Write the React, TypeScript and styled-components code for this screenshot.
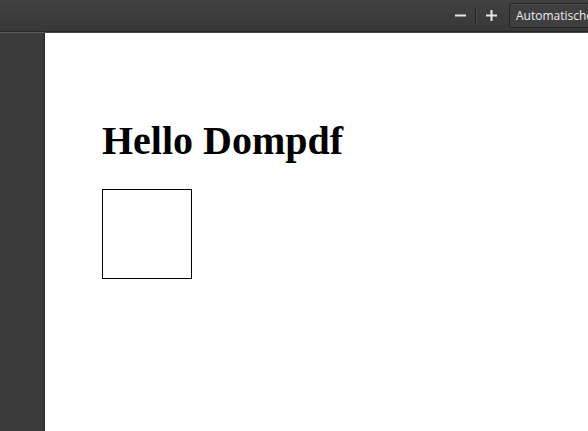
import styled, { createGlobalStyle } from "styled-components";

const GlobalStyle = createGlobalStyle`
  html, body {
    margin: 0;
    padding: 0;
    overflow: hidden;
    background: #3a3a3a;
  }
`;

const Viewer = styled.div`
  width: 588px;
  height: 431px;
  display: flex;
  flex-direction: column;
  background: #3b3b3b;
  overflow: hidden;
`;

const Toolbar = styled.div`
  height: 32px;
  flex: none;
  display: flex;
  align-items: center;
  padding-left: 449px;
  white-space: nowrap;
  overflow: hidden;
  background: linear-gradient(#414141, #383838);
  border-bottom: 1px solid #2a2a2a;
  box-shadow: 0 1px 0 #5a5a5a;
  box-sizing: border-box;
  font-family: "Open Sans", "Liberation Sans", sans-serif;
`;

const ToolButton = styled.button`
  width: 22px;
  height: 24px;
  flex: none;
  padding: 0;
  border: none;
  background: transparent;
  display: flex;
  align-items: center;
  justify-content: center;
`;

const Separator = styled.div`
  width: 1px;
  height: 18px;
  flex: none;
  margin: 0 4px;
  background: #222;
  box-shadow: 1px 0 0 #4a4a4a;
`;

const ScaleSelect = styled.div`
  height: 25px;
  flex: none;
  margin-left: 7px;
  padding: 0 6px;
  display: flex;
  align-items: center;
  border: 1px solid #262626;
  border-radius: 2px;
  background: #3f3f3f;
  color: #ececec;
  font-size: 12px;
  box-sizing: border-box;
  box-shadow: inset 0 1px 0 #4c4c4c;
`;

const Body = styled.div`
  flex: 1;
  display: flex;
  padding-left: 45px;
  padding-top: 1px;
  min-height: 0;
`;

const Page = styled.div`
  flex: 1;
  background: #fff;
  padding: 85px 0 0 57px;
  font-family: "Liberation Serif", "Times New Roman", serif;
  box-shadow: 0 0 3px rgba(0, 0, 0, 0.6);
`;

const Heading = styled.h1`
  margin: 0;
  font-size: 40px;
  font-weight: bold;
  line-height: 46px;
  color: #000;
`;

const Square = styled.div`
  width: 88px;
  height: 88px;
  margin-top: 25px;
  border: 1px solid #000;
`;

const Icon = ({ plus }: { plus?: boolean }) => (
  <svg width="11" height="11" viewBox="0 0 11 11">
    <rect x="0" y="4.5" width="11" height="2" fill="#e8e8e8" />
    {plus && <rect x="4.5" y="0" width="2" height="11" fill="#e8e8e8" />}
  </svg>
);

export default function App() {
  return (
    <>
      <GlobalStyle />
      <Viewer>
        <Toolbar>
          <ToolButton>
            <Icon />
          </ToolButton>
          <Separator />
          <ToolButton>
            <Icon plus />
          </ToolButton>
          <ScaleSelect>Automatischer Zoom</ScaleSelect>
        </Toolbar>
        <Body>
          <Page>
            <Heading>Hello Dompdf</Heading>
            <Square />
          </Page>
        </Body>
      </Viewer>
    </>
  );
}
